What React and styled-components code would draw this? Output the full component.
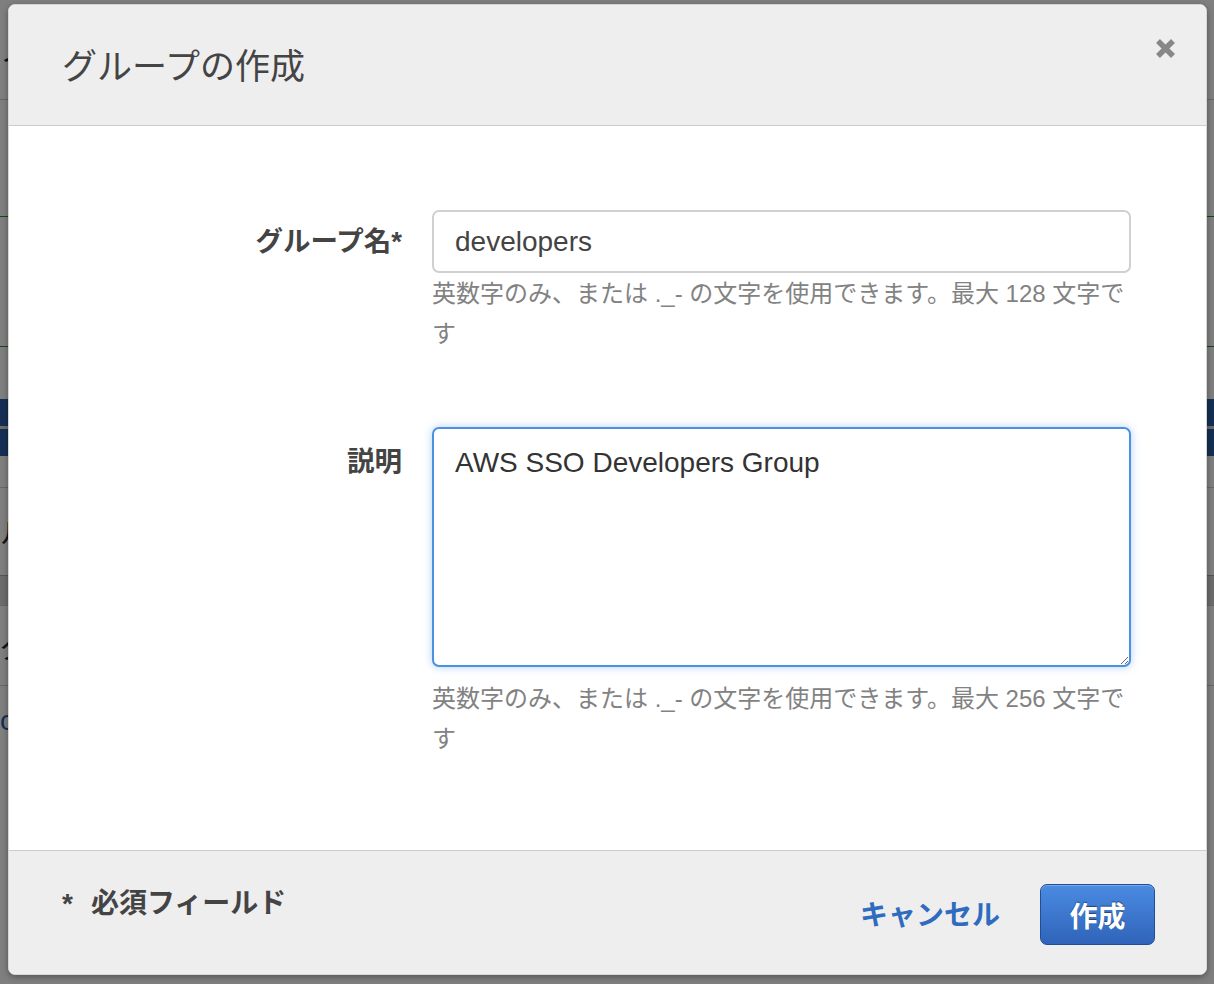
import React, { useEffect, useRef } from 'react';
import styled, { createGlobalStyle } from 'styled-components';

const GlobalStyle = createGlobalStyle`
  html, body {
    margin: 0;
    padding: 0;
  }
  body {
    font-family: "Liberation Sans", "Noto Sans CJK JP", sans-serif;
    color: #444;
  }
  * {
    box-sizing: border-box;
  }
`

const font = `"Liberation Sans", "Noto Sans CJK JP", sans-serif`;

// the page that lies behind the dialog, only a sliver of it shows at the left
const Page = styled.div`
  position: relative;
  height: 984px;
  overflow: hidden;
  background: #fff;
`

const PageRow = styled.div`
  height: ${p => p.h}px;
  background: ${p => p.bg || '#fff'};
  border-bottom: ${p => p.line ? `${p.lineW || 1}px solid ${p.line}` : 'none'};
  font-family: ${font};
  font-size: 28px;
  color: ${p => p.color || '#222'};
  display: flex;
  align-items: center;
`

const Overlay = styled.div`
  position: absolute;
  inset: 0;
  background: rgba(0, 0, 0, 0.5);
  padding: 4px 7px 9px 8px;
  display: flex;
`

const Modal = styled.div`
  flex: 1;
  display: flex;
  flex-direction: column;
  background: #fff;
  border: 1px solid #d6d6d6;
  border-radius: 7px;
  box-shadow: 0 2px 6px rgba(0, 0, 0, 0.35);
  overflow: hidden;
`

const Header = styled.div`
  height: 121px;
  flex: none;
  display: flex;
  align-items: center;
  justify-content: space-between;
  padding: 0 29px 0 53px;
  background: #eee;
  border-bottom: 1px solid #ccc;
`

const Title = styled.h1`
  margin: 2px 0 0;
  font-family: ${font};
  font-weight: 400;
  font-size: 35px;
  line-height: 1;
  color: #444;
`

const Close = styled.button`
  align-self: flex-start;
  margin-top: 31px;
  width: 24px;
  height: 24px;
  padding: 0;
  border: 0;
  background: none;
  cursor: pointer;
  display: flex;
  align-items: center;
  justify-content: center;
`

const Body = styled.div`
  flex: 1;
  display: grid;
  grid-template-columns: 393px 699px;
  column-gap: 30px;
  row-gap: 73px;
  align-content: start;
  padding-top: 84px;
`

const Label = styled.label`
  text-align: right;
  padding-top: ${p => p.top}px;
  font-family: ${font};
  font-weight: 700;
  font-size: 27.5px;
  line-height: 36px;
  color: #444;
`

const Field = styled.div`
  display: flex;
  flex-direction: column;
`

const TextInput = styled.input`
  height: 63px;
  padding: 1px 21px 0;
  border: 2px solid #d0d0d0;
  border-radius: 7px;
  font-family: ${font};
  font-size: 28px;
  color: #444;
  outline: none;
  background: #fff;
`

const TextArea = styled.textarea`
  display: block;
  height: 240px;
  padding: 16px 21px 14px;
  border: 2px solid #4d8fe0;
  border-radius: 7px;
  box-shadow: 0 0 9px rgba(82, 150, 236, 0.45);
  font-family: ${font};
  font-size: 28px;
  line-height: 36px;
  color: #333;
  caret-color: #111;
  outline: none;
  resize: vertical;
`

const Help = styled.p`
  margin: ${p => p.gap}px 0 0;
  font-family: ${font};
  font-size: 24px;
  line-height: 40px;
  color: #828282;
`

const Footer = styled.div`
  height: 124px;
  flex: none;
  display: flex;
  justify-content: space-between;
  align-items: flex-start;
  padding: 0 51px 0 53px;
  background: #eee;
  border-top: 1px solid #ccc;
`

const Note = styled.div`
  margin-top: 35px;
  font-family: ${font};
  font-weight: 700;
  font-size: 28px;
  line-height: 36px;
  color: #444;
`

const Star = styled.span`
  margin-right: 18px;
`

const Actions = styled.div`
  margin-top: 32px;
  display: flex;
  align-items: center;
  gap: 40px;
`

const CancelLink = styled.a`
  padding-top: 3px;
  font-family: ${font};
  font-weight: 700;
  font-size: 28px;
  line-height: 60px;
  color: #2f6bbf;
  text-decoration: none;
  cursor: pointer;
`

const PrimaryButton = styled.button`
  width: 115px;
  height: 61px;
  padding-top: 2px;
  border: 1px solid #1f4f96;
  border-radius: 7px;
  background: linear-gradient(to bottom, #4b8be2, #2f64ba);
  box-shadow: inset 0 1px 0 rgba(255, 255, 255, 0.25);
  font-family: ${font};
  font-weight: 700;
  font-size: 28px;
  color: #fff;
  text-shadow: 0 -1px 1px rgba(0, 0, 0, 0.45);
  cursor: pointer;
`

const CloseIcon = () => (
  <svg width="23" height="23" viewBox="0 0 23 23">
    <path d="M4 4 L19 19 M19 4 L4 19" stroke="#878787" strokeWidth="5.5" strokeLinecap="butt" />
  </svg>
)

export default function App() {
  const areaRef = useRef(null);

  useEffect(() => {
    const el = areaRef.current;
    if (el) {
      el.focus();
      const end = el.value.length;
      el.setSelectionRange(end, end);
    }
  }, []);

  return (
    <>
      <GlobalStyle />
      <Page>
        <PageRow h={100} line="#cfcfcf">ノ</PageRow>
        <PageRow h={117} line="#2e8b2e" />
        <PageRow h={130} line="#2e8b2e" />
        <PageRow h={52} />
        <PageRow h={30} bg="#2b5fa8" line="#d8d8d8" lineW={3} />
        <PageRow h={27} bg="#2b5fa8" />
        <PageRow h={32} line="#cfcfcf" />
        <PageRow h={88} line="#aaa">ル</PageRow>
        <PageRow h={30} bg="#d9d9d9" line="#cfcfcf" />
        <PageRow h={80} line="#cfcfcf">グ</PageRow>
        <PageRow h={70} color="#2b5fa8">c</PageRow>
        <Overlay>
          <Modal role="dialog">
            <Header>
              <Title>グループの作成</Title>
              <Close aria-label="閉じる"><CloseIcon /></Close>
            </Header>
            <Body>
              <Label top={14} htmlFor="group-name">グループ名*</Label>
              <Field>
                <TextInput id="group-name" defaultValue="developers" />
                <Help gap={1}>英数字のみ、または ._- の文字を使用できます。最大 128 文字です</Help>
              </Field>
              <Label top={17} htmlFor="group-desc">説明</Label>
              <Field>
                <TextArea id="group-desc" ref={areaRef} defaultValue="AWS SSO Developers Group" />
                <Help gap={12}>英数字のみ、または ._- の文字を使用できます。最大 256 文字です</Help>
              </Field>
            </Body>
            <Footer>
              <Note><Star>*</Star>必須フィールド</Note>
              <Actions>
                <CancelLink>キャンセル</CancelLink>
                <PrimaryButton>作成</PrimaryButton>
              </Actions>
            </Footer>
          </Modal>
        </Overlay>
      </Page>
    </>
  );
}
